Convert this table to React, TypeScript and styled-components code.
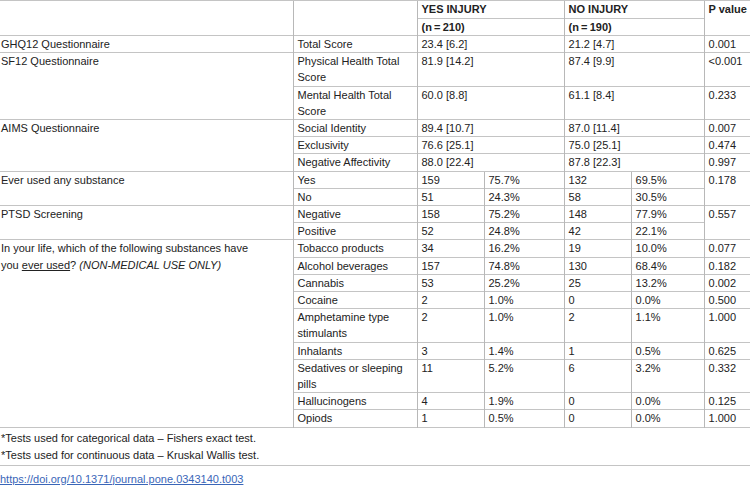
import React from 'react'
import styled, { createGlobalStyle } from 'styled-components'

const GlobalStyle = createGlobalStyle`
    html, body {
        margin: 0;
        padding: 0;
        background: #ffffff;
    }
    body {
        font-family: "Liberation Sans", Arial, sans-serif;
        color: #222222;
    }
`

type Continuous = {
    name: string,
    yes: string,
    no: string,
    p: string
}

type Categorical = {
    name: string,
    yesN: string,
    yesPct: string,
    noN: string,
    noPct: string,
    p?: string
}

type Group = {
    label: React.ReactNode,
    kind: 'cont' | 'cat',
    rows: Array<Continuous | Categorical>,
    sharedP?: string
}

const groups: Group[] = [
    {
        label: 'GHQ12 Questionnaire',
        kind: 'cont',
        rows: [{ name: 'Total Score', yes: '23.4 [6.2]', no: '21.2 [4.7]', p: '0.001' }]
    },
    {
        label: 'SF12 Questionnaire',
        kind: 'cont',
        rows: [
            { name: 'Physical Health Total Score', yes: '81.9 [14.2]', no: '87.4 [9.9]', p: '<0.001' },
            { name: 'Mental Health Total Score', yes: '60.0 [8.8]', no: '61.1 [8.4]', p: '0.233' }
        ]
    },
    {
        label: 'AIMS Questionnaire',
        kind: 'cont',
        rows: [
            { name: 'Social Identity', yes: '89.4 [10.7]', no: '87.0 [11.4]', p: '0.007' },
            { name: 'Exclusivity', yes: '76.6 [25.1]', no: '75.0 [25.1]', p: '0.474' },
            { name: 'Negative Affectivity', yes: '88.0 [22.4]', no: '87.8 [22.3]', p: '0.997' }
        ]
    },
    {
        label: 'Ever used any substance',
        kind: 'cat',
        sharedP: '0.178',
        rows: [
            { name: 'Yes', yesN: '159', yesPct: '75.7%', noN: '132', noPct: '69.5%' },
            { name: 'No', yesN: '51', yesPct: '24.3%', noN: '58', noPct: '30.5%' }
        ]
    },
    {
        label: 'PTSD Screening',
        kind: 'cat',
        sharedP: '0.557',
        rows: [
            { name: 'Negative', yesN: '158', yesPct: '75.2%', noN: '148', noPct: '77.9%' },
            { name: 'Positive', yesN: '52', yesPct: '24.8%', noN: '42', noPct: '22.1%' }
        ]
    },
    {
        label: (
            <>
                In your life, which of the following substances have you <u>ever used</u>? <i>(NON-MEDICAL USE ONLY)</i>
            </>
        ),
        kind: 'cat',
        rows: [
            { name: 'Tobacco products', yesN: '34', yesPct: '16.2%', noN: '19', noPct: '10.0%', p: '0.077' },
            { name: 'Alcohol beverages', yesN: '157', yesPct: '74.8%', noN: '130', noPct: '68.4%', p: '0.182' },
            { name: 'Cannabis', yesN: '53', yesPct: '25.2%', noN: '25', noPct: '13.2%', p: '0.002' },
            { name: 'Cocaine', yesN: '2', yesPct: '1.0%', noN: '0', noPct: '0.0%', p: '0.500' },
            { name: 'Amphetamine type stimulants', yesN: '2', yesPct: '1.0%', noN: '2', noPct: '1.1%', p: '1.000' },
            { name: 'Inhalants', yesN: '3', yesPct: '1.4%', noN: '1', noPct: '0.5%', p: '0.625' },
            { name: 'Sedatives or sleeping pills', yesN: '11', yesPct: '5.2%', noN: '6', noPct: '3.2%', p: '0.332' },
            { name: 'Hallucinogens', yesN: '4', yesPct: '1.9%', noN: '0', noPct: '0.0%', p: '0.125' },
            { name: 'Opiods', yesN: '1', yesPct: '0.5%', noN: '0', noPct: '0.0%', p: '1.000' }
        ]
    }
]

// the last column runs past the right edge of the view
const colWidths = [293, 124, 67, 80, 67, 73, 66]

const Page = styled.div`
    width: 750px;
    overflow: hidden;
`

const Table = styled.table`
    width: 770px;
    border-collapse: collapse;
    table-layout: fixed;
    border-top: 1px solid #c4c4c4;
    border-bottom: 1px solid #c4c4c4;
`

const Col = styled.col<{ $w: number }>`
    width: ${({ $w }) => $w}px;
`

const Cell = styled.td<{ $first?: boolean, $tall?: boolean }>`
    font-size: 11px;
    line-height: 16.2px;
    padding: 0 ${({ $first }) => $first ? '40px' : '4px'} 0 ${({ $first }) => $first ? '1px' : '4px'};
    vertical-align: top;
    text-align: left;
    border-top: 1px solid #c4c4c4;
    border-left: ${({ $first }) => $first ? 'none' : '1px solid #b8b8b8'};
    border-right: none;
`

const HeadCell = styled(Cell).attrs({ as: 'th' })`
    font-weight: bold;
    line-height: 16.5px;
`

const Notes = styled.div`
    width: 750px;
    border-bottom: 1px solid #c4c4c4;
    padding: 2px 0 1px;
`

const Note = styled.p`
    margin: 0;
    font-size: 11px;
    line-height: 17px;
    padding-left: 1px;
`

const DoiLink = styled.a`
    display: block;
    font-size: 11px;
    line-height: 16px;
    margin-top: 5px;
    color: #3a66b8;
    text-decoration: underline;
`

const GroupRows: React.FC<{ group: Group }> = ({ group }) => {
    const span = group.rows.length
    return (
        <>
            {group.rows.map((row, i) => (
                <tr key={i}>
                    {i === 0 && <Cell $first rowSpan={span}>{group.label}</Cell>}
                    <Cell>{row.name}</Cell>
                    {group.kind === 'cont' ? (
                        <>
                            <Cell colSpan={2}>{(row as Continuous).yes}</Cell>
                            <Cell colSpan={2}>{(row as Continuous).no}</Cell>
                            <Cell>{(row as Continuous).p}</Cell>
                        </>
                    ) : (
                        <>
                            <Cell>{(row as Categorical).yesN}</Cell>
                            <Cell>{(row as Categorical).yesPct}</Cell>
                            <Cell>{(row as Categorical).noN}</Cell>
                            <Cell>{(row as Categorical).noPct}</Cell>
                            {group.sharedP
                                ? i === 0 && <Cell rowSpan={span}>{group.sharedP}</Cell>
                                : <Cell>{(row as Categorical).p}</Cell>}
                        </>
                    )}
                </tr>
            ))}
        </>
    )
}

const App: React.FC = () => {
    return (
        <Page>
            <GlobalStyle />
            <Table>
                <colgroup>
                    {colWidths.map((w, i) => <Col key={i} $w={w} />)}
                </colgroup>
                <thead>
                    <tr>
                        <HeadCell $first rowSpan={2}></HeadCell>
                        <HeadCell rowSpan={2}></HeadCell>
                        <HeadCell colSpan={2}>YES INJURY</HeadCell>
                        <HeadCell colSpan={2}>NO INJURY</HeadCell>
                        <HeadCell rowSpan={2}>P value</HeadCell>
                    </tr>
                    <tr>
                        <HeadCell colSpan={2}>(n{'\u2009'}={'\u2009'}210)</HeadCell>
                        <HeadCell colSpan={2}>(n{'\u2009'}={'\u2009'}190)</HeadCell>
                    </tr>
                </thead>
                <tbody>
                    {groups.map((g, i) => <GroupRows key={i} group={g} />)}
                </tbody>
            </Table>
            <Notes>
                <Note>*Tests used for categorical data – Fishers exact test.</Note>
                <Note>*Tests used for continuous data – Kruskal Wallis test.</Note>
            </Notes>
            <DoiLink href="https://doi.org/10.1371/journal.pone.0343140.t003">https://doi.org/10.1371/journal.pone.0343140.t003</DoiLink>
        </Page>
    )
}

export default App
